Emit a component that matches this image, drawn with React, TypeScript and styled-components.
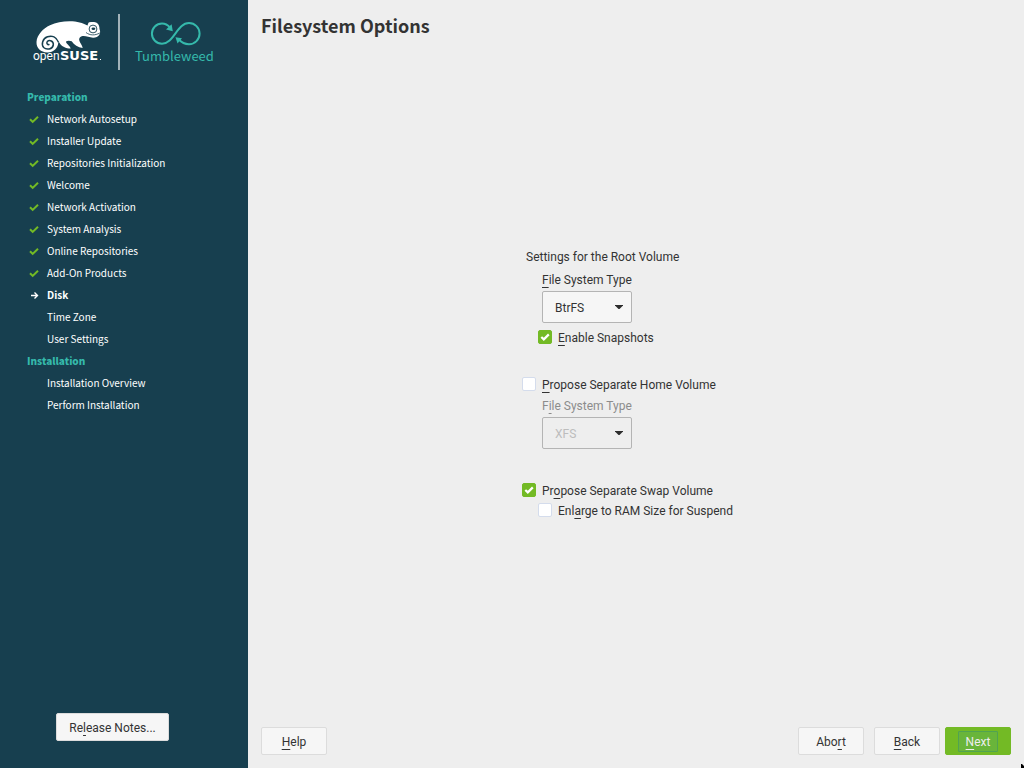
import React from "react";
import styled, { createGlobalStyle } from "styled-components";

const uiFont = 'Roboto, "Liberation Sans", sans-serif';
const brandFont = '"Noto Sans CJK SC", "Noto Sans", sans-serif';
const logoFont = '"DejaVu Sans", sans-serif';
const teal = "#35b9ab";
const green = "#73ba25";

const GlobalStyle = createGlobalStyle`
  *, *::before, *::after { box-sizing: border-box; }
  body { margin: 0; background: #eee; color: #333; font: 12px/20px ${uiFont}; }
`;

const Page = styled.div`
  display: flex;
  min-height: 100vh;
  position: relative;
  overflow: hidden;
`;

const Sidebar = styled.aside`
  flex: 0 0 248px;
  display: flex;
  flex-direction: column;
  background: #173f4f;
  color: #fff;
  font-family: ${brandFont};
`;

const Brand = styled.header`
  display: flex;
  height: 86px;
`;

const Steps = styled.nav`
  flex: 1;
  padding: 0 27px;
`;

const StepHeading = styled.h2`
  margin: 0;
  font-size: 10px;
  line-height: 22px;
  font-weight: 900;
  color: ${teal};
`;

const StepList = styled.ol`
  margin: 0;
  padding: 0;
  list-style: none;
`;

const Step = styled.li<{ $current?: boolean }>`
  display: flex;
  align-items: center;
  gap: 6px;
  height: 22px;
  font-size: 10px;
  line-height: 22px;
  white-space: nowrap;
  font-weight: ${(p) => (p.$current ? 700 : 400)};
`;

const StepMark = styled.svg`
  flex: none;
  width: 14px;
  height: 14px;
`;

const Button = styled.button<{ $kind?: "primary" | "wide" }>`
  width: ${(p) => (p.$kind === "wide" ? 113 : 66)}px;
  height: 28px;
  padding: ${(p) => (p.$kind === "primary" ? 0 : 2)}px 0 0;
  display: flex;
  align-items: center;
  justify-content: center;
  border: 1px solid ${(p) => (p.$kind === "primary" ? green : "#dcdcdc")};
  border-radius: 2px;
  background: ${(p) => (p.$kind === "primary" ? green : "#f6f6f6")};
  color: ${(p) => (p.$kind === "primary" ? "#eee" : "#333")};
  font: 12px/20px ${uiFont};
`;

const FocusFrame = styled.span`
  padding: 1px 7px 0;
  border: 1px solid #51a351;
  border-radius: 1px;
  background: #69b53a;
  line-height: 18px;
`;

const SidebarFooter = styled.footer`
  display: flex;
  padding: 0 56px 27px;
`;

const Main = styled.main`
  flex: 1;
  display: flex;
  flex-direction: column;
  padding: 12px 13px 13px;
`;

const Title = styled.h1`
  margin: 0;
  font: 700 18px/27px ${brandFont};
`;

const Body = styled.form`
  flex: 1;
  display: flex;
  align-items: center;
  justify-content: center;
`;

const Settings = styled.div`
  display: flex;
  flex-direction: column;
  gap: 27px;
  padding: 2px 17px 0 0;
`;

const Group = styled.fieldset`
  margin: 0;
  padding: 0;
  border: 0;
  min-width: 0;
`;

const GroupTitle = styled.legend`
  padding: 0 4px 3px;
`;

const Field = styled.div<{ $dim?: boolean }>`
  display: flex;
  flex-direction: column;
  align-items: flex-start;
  gap: 1px;
  padding: ${(p) => (p.$dim ? 1 : 0)}px 0 5px 20px;
  color: ${(p) => (p.$dim ? "#8c8c8c" : "#333")};
`;

const SelectWrap = styled.div`
  position: relative;
  display: flex;
`;

const Select = styled.select`
  appearance: none;
  width: 90px;
  height: 32px;
  padding: 2px 12px 0;
  border: 1px solid #b4b4b4;
  border-radius: 2px;
  background: #f6f6f6;
  color: #333;
  font: 12px/20px ${uiFont};
  &:disabled { background: #eee; color: #bdbdbd; opacity: 1; }
`;

const Arrow = styled.svg`
  position: absolute;
  right: 9px;
  top: 14px;
  width: 8px;
  height: 4px;
  pointer-events: none;
`;

const CheckRow = styled.label<{ $nested?: boolean }>`
  display: flex;
  align-items: center;
  gap: 6px;
  height: 20px;
  padding-left: ${(p) => (p.$nested ? 16 : 0)}px;
  white-space: nowrap;
`;

const Checkbox = styled.input`
  appearance: none;
  flex: none;
  width: 14px;
  height: 14px;
  margin: 0 0 2px;
  border: 1px solid #d4dcec;
  border-radius: 2px;
  background: #fff;
  &:checked {
    border-color: ${green};
    background: ${green} url("data:image/svg+xml,%3Csvg xmlns='http://www.w3.org/2000/svg' viewBox='0 0 12 12'%3E%3Cpath d='M2.3 6l2.5 2.4L9.8 3.4' fill='none' stroke='white' stroke-width='2.2'/%3E%3C/svg%3E") center / 12px 12px no-repeat;
  }
`;

const Key = styled.u`
  text-decoration: underline;
  text-decoration-thickness: 1px;
  text-underline-offset: 3px;
  text-decoration-skip-ink: none;
`;

const Footer = styled.footer`
  display: flex;
  justify-content: space-between;
`;

const Actions = styled.div`
  display: flex;
  gap: 5px;
`;

const Dismiss = styled.div`
  display: flex;
  gap: 10px;
`;

const Pointer = styled.svg`
  position: absolute;
  right: 0;
  bottom: 0;
  width: 3px;
  height: 4px;
`;

const Logo = () => (
  <svg width="248" height="86" viewBox="0 0 248 86" role="img" aria-label="openSUSE Tumbleweed">
    <path
      fill="#fff"
      d="M36.500 42C37 35 43 28.500 50 25.300C57 22 66 20.800 75 21.600C80 22.200 84 23.800 87.500 25.600C88 23.800 88.300 22.800 89 22.200C91 22.300 94.500 21.400 97 23C99 24.500 99.500 27 99.500 29C100.300 31 100.400 33 99.500 34.500C98 37 95.500 37.800 93 37.700C89 37 85 35.500 81.700 36.200C79.500 37 78.800 38.500 79.300 40.500C79.800 43 82.300 45 82.700 48C78 47.500 74 45 71.700 41.300C70 40.700 67.500 40.500 66 41.500C66 44 70 45.500 70.700 48.600C66 48.600 61.500 46.500 59.300 42.500L58.300 42C58.300 48.500 53 52.800 47 52.500C41 52.300 36.200 48 36.500 42Z"
    />
    <path
      d="M58.500 42.300C56.500 37 52 35.300 47.500 36.800C42.500 38.600 41 44.500 43.700 47.500C46.500 50.300 52.500 49.300 53.300 45C53.800 41.200 49.500 39.300 47.300 41.600C46 43.500 47.800 45.300 49.500 44.300"
      fill="none"
      stroke="#173f4f"
      strokeWidth="1.500"
    />
    <circle cx="93" cy="29" r="3.900" fill="#fff" stroke="#173f4f" strokeWidth="0.900" />
    <ellipse cx="93.400" cy="28.800" rx="1.900" ry="1.300" fill="#173f4f" />
    <path d="M86 32.500C90 35.600 95 35.600 99.800 33" fill="none" stroke="#173f4f" strokeWidth="0.800" />
    <text x="33" y="60" fill="#fff" fontFamily={uiFont} fontSize="12">open</text>
    <text x="60" y="60" fill="#fff" fontFamily={logoFont} fontSize="13" fontWeight="700">SUSE</text>
    <rect x="100" y="59" width="1" height="1" fill="#fff" />
    <rect x="118" y="14" width="2" height="56" fill="#a2b2b9" />
    <path
      d="M170 27.500C167.500 24.600 165 23.500 162 23.500A10.100 10.100 0 0 0 162 43.700C174 43.700 177 23 189 23A10.600 10.600 0 0 1 189 44.200C185 44.200 181.500 42.500 179 39.500"
      fill="none"
      stroke={teal}
      strokeWidth="2"
    />
    <path d="M171.600 24.200L172.800 31.200L166 29.600ZM175.500 37.200L182 38.200L177.500 43.500Z" fill={teal} />
    <text x="135" y="61" fill={teal} fontFamily={brandFont} fontSize="13">Tumbleweed</text>
  </svg>
);

type StepState = "done" | "current" | "todo";

const Mark = ({ state }: { state: StepState }) => (
  <StepMark viewBox="0 0 14 14" aria-hidden="true">
    {state === "done" && <path d="M3 7.200l2.700 2.700L11 4.700" fill="none" stroke={green} strokeWidth="2" />}
    {state === "current" && (
      <path d="M4 7.500h6M7.500 4.500l3 3l-3 3" fill="none" stroke="#fff" strokeWidth="1.400" />
    )}
  </StepMark>
);

const preparation: [string, StepState][] = [
  ["Network Autosetup", "done"],
  ["Installer Update", "done"],
  ["Repositories Initialization", "done"],
  ["Welcome", "done"],
  ["Network Activation", "done"],
  ["System Analysis", "done"],
  ["Online Repositories", "done"],
  ["Add-On Products", "done"],
  ["Disk", "current"],
  ["Time Zone", "todo"],
  ["User Settings", "todo"],
];

const installation: [string, StepState][] = [
  ["Installation Overview", "todo"],
  ["Perform Installation", "todo"],
];

const StepSection = ({ title, steps }: { title: string; steps: [string, StepState][] }) => (
  <>
    <StepHeading>{title}</StepHeading>
    <StepList>
      {steps.map(([name, state]) => (
        <Step key={name} $current={state === "current"} aria-current={state === "current" ? "step" : undefined}>
          <Mark state={state} />
          {name}
        </Step>
      ))}
    </StepList>
  </>
);

const DropDown = ({ id, value, disabled }: { id: string; value: string; disabled?: boolean }) => (
  <SelectWrap>
    <Select id={id} defaultValue={value} disabled={disabled}>
      <option>{value}</option>
    </Select>
    <Arrow viewBox="0 0 8 4" aria-hidden="true">
      <path d="M0 0H8V0.500L4.500 4H3.500L0 0.500Z" fill="#2d2d2d" />
    </Arrow>
  </SelectWrap>
);

export default function App() {
  return (
    <Page>
      <GlobalStyle />
      <Sidebar>
        <Brand>
          <Logo />
        </Brand>
        <Steps aria-label="Installation steps">
          <StepSection title="Preparation" steps={preparation} />
          <StepSection title="Installation" steps={installation} />
        </Steps>
        <SidebarFooter>
          <Button type="button" $kind="wide">
            <span>Re<Key>l</Key>ease Notes...</span>
          </Button>
        </SidebarFooter>
      </Sidebar>
      <Main>
        <Title>Filesystem Options</Title>
        <Body>
          <Settings>
            <Group>
              <GroupTitle>Settings for the Root Volume</GroupTitle>
              <Field>
                <label htmlFor="root-fs"><Key>F</Key>ile System Type</label>
                <DropDown id="root-fs" value="BtrFS" />
              </Field>
              <CheckRow $nested>
                <Checkbox type="checkbox" defaultChecked />
                <span><Key>E</Key>nable Snapshots</span>
              </CheckRow>
            </Group>
            <Group>
              <CheckRow>
                <Checkbox type="checkbox" />
                <span><Key>P</Key>ropose Separate Home Volume</span>
              </CheckRow>
              <Field $dim>
                <label htmlFor="home-fs">F<Key>i</Key>le System Type</label>
                <DropDown id="home-fs" value="XFS" disabled />
              </Field>
            </Group>
            <Group>
              <CheckRow>
                <Checkbox type="checkbox" defaultChecked />
                <span>Pr<Key>o</Key>pose Separate Swap Volume</span>
              </CheckRow>
              <CheckRow $nested>
                <Checkbox type="checkbox" />
                <span>Enl<Key>a</Key>rge to RAM Size for Suspend</span>
              </CheckRow>
            </Group>
          </Settings>
        </Body>
        <Footer>
          <Button type="button"><span><Key>H</Key>elp</span></Button>
          <Actions>
            <Dismiss>
              <Button type="button"><span>Abo<Key>r</Key>t</span></Button>
              <Button type="button"><span><Key>B</Key>ack</span></Button>
            </Dismiss>
            <Button type="button" $kind="primary">
              <FocusFrame><Key>N</Key>ext</FocusFrame>
            </Button>
          </Actions>
        </Footer>
      </Main>
      <Pointer viewBox="0 0 3 4" aria-hidden="true">
        <path d="M0 0H1L3 2V4H0Z" fill="#000" />
      </Pointer>
    </Page>
  );
}
